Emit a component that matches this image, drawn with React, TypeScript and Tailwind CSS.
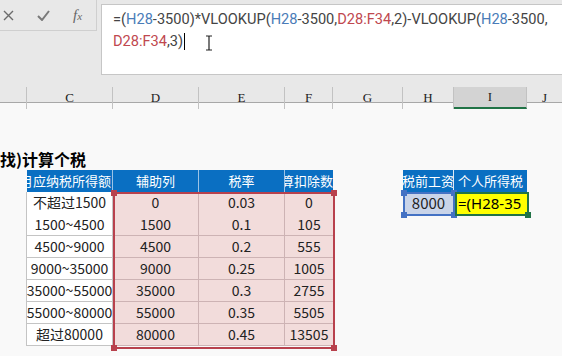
import React from 'react';

const cjk = { fontFamily: '"Noto Sans CJK SC", "Noto Sans", sans-serif' };

const GRID = 'grid grid-cols-[27px_86px_86px_86px_48px_70px_51px_73px_35px]';

const rows = [
  ['不超过1500', '0', '0.03', '0'],
  ['1500~4500', '1500', '0.1', '105'],
  ['4500~9000', '4500', '0.2', '555'],
  ['9000~35000', '9000', '0.25', '1005'],
  ['35000~55000', '35000', '0.3', '2755'],
  ['55000~80000', '55000', '0.35', '5505'],
  ['超过80000', '80000', '0.45', '13505'],
];

function Handle({ className }: { className: string }) {
  return <div className={`absolute w-[6px] h-[6px] ${className}`} />;
}

function FormulaBar() {
  return (
    <div className="flex h-[86px] bg-[#e8e8e8]">
      <div className="w-[101px] shrink-0">
        <div className="w-[97px] h-[31px] border-r border-b border-[#cfcfcf] flex items-center text-[#707070]">
          <svg className="ml-[3px]" width="11" height="11" viewBox="0 0 11 11">
            <path d="M1 1L10 10M10 1L1 10" stroke="#6b6b6b" strokeWidth="1.4" />
          </svg>
          <svg className="ml-[23px]" width="13" height="11" viewBox="0 0 13 11">
            <path d="M1 6L5 10L12 1" stroke="#7a7a7a" strokeWidth="2" fill="none" />
          </svg>
          <span className="ml-[23px] italic text-[15px] text-[#666]" style={{ fontFamily: '"Liberation Serif", serif' }}>
            f<span className="text-[11px]">x</span>
          </span>
        </div>
      </div>
      <div className="flex-1 mt-[4px] h-[71px] bg-white border border-r-0 border-[#c6c6c6] pl-[11px] pt-[3px] text-[14.6px] leading-[22px] text-[#444] whitespace-nowrap relative" style={{ fontFamily: 'Roboto, "Noto Sans", sans-serif' }}>
        <div>
          =(<span className="text-[#4a7cb8]">H28</span>-3500)*VLOOKUP(<span className="text-[#4a7cb8]">H28</span>-3500,<span className="text-[#c0484f]">D28:F34</span>,2)-VLOOKUP(<span className="text-[#4a7cb8]">H28</span>-3500,
        </div>
        <div className="flex items-center">
          <span className="text-[#c0484f]">D28:F34</span>,3)
          <span className="inline-block w-[1px] h-[17px] bg-black ml-[1px]" />
          <svg className="ml-[20px] mt-[4px]" width="8" height="16" viewBox="0 0 8 16">
            <path d="M1 1H3.5Q4 1 4 2V14Q4 15 3.5 15H1M7 1H4.5Q4 1 4 2M7 15H4.5Q4 15 4 14" stroke="#222" strokeWidth="1.2" fill="none" />
          </svg>
        </div>
      </div>
    </div>
  );
}

function ColumnHeaders() {
  const letters = ['', 'C', 'D', 'E', 'F', 'G', 'H', 'I', 'J'];
  return (
    <div className={`${GRID} h-[17px] bg-[#e8e8e8] border-b border-[#a8a8a8]`} style={{ fontFamily: '"Liberation Serif", serif' }}>
      {letters.map((l, i) => (
        <div
          key={i}
          className={`flex items-center justify-center text-[13px] text-[#222] ${i < 8 ? 'border-r border-[#c2c2c2] mt-[1px]' : ''} ${l === 'I' ? 'bg-[#d3d3d3] border-b-2 border-b-[#217346]' : ''}`}
        >
          {l}
        </div>
      ))}
    </div>
  );
}

export default function App() {
  return (
    <div className="w-[562px] h-[356px] overflow-hidden bg-[#f9f9f9]" style={cjk}>
      <FormulaBar />
      <ColumnHeaders />
      <div className="relative">
        <div className="h-[45px]" />
        {/* title */}
        <div className={`${GRID} h-[22px]`}>
          <div className="col-span-2 flex items-center overflow-hidden">
            <span className="whitespace-nowrap font-bold text-[16px] text-black ml-[-16px]">查找)计算个税</span>
          </div>
        </div>
        {/* table header */}
        <div className={`${GRID} h-[22px] text-white text-[13px]`}>
          <div />
          <div className="bg-[#0a6fc2] border-r border-[#9cc3e6] flex items-center justify-end overflow-hidden whitespace-nowrap pr-[1px]">全月应纳税所得额</div>
          <div className="bg-[#0a6fc2] border-r border-[#9cc3e6] flex items-center justify-center">辅助列</div>
          <div className="bg-[#0a6fc2] border-r border-[#9cc3e6] flex items-center justify-center">税率</div>
          <div className="bg-[#0a6fc2] flex items-center overflow-hidden whitespace-nowrap">
            <span className="ml-[-4px]">算扣除数</span>
          </div>
          <div />
          <div className="bg-[#0a6fc2] border-r border-[#dce9f5] flex items-center justify-center whitespace-nowrap overflow-hidden">税前工资</div>
          <div className="bg-[#0a6fc2] flex items-center justify-center whitespace-nowrap">个人所得税</div>
          <div />
        </div>
        {/* data rows */}
        {rows.map((r, idx) => (
          <div key={idx} className={`${GRID} h-[22px] text-[14px] text-[#222]`}>
            <div className="border-r border-[#c4c4c4]" />
            <div className="bg-white border-r border-b border-[#c4c4c4] flex items-center justify-center overflow-hidden whitespace-nowrap">
              {r[0]}
            </div>
            <div className="bg-[#f2dcdb] border-r border-b border-[#cdb3b4] flex items-center justify-center">{r[1]}</div>
            <div className="bg-[#f2dcdb] border-r border-b border-[#cdb3b4] flex items-center justify-center">{r[2]}</div>
            <div className="bg-[#f2dcdb] border-b border-[#cdb3b4] flex items-center justify-center">{r[3]}</div>
            <div />
            {idx === 0 ? (
              <>
                <div className="bg-[#c9d4e9] flex items-center justify-center text-[15px]">8000</div>
                <div className="bg-[#ffff00] flex items-center overflow-hidden whitespace-nowrap text-[15px] text-black pl-[4px]" style={{ fontFamily: '"Noto Sans", sans-serif' }}>
                  =(H28-35
                </div>
              </>
            ) : (
              <>
                <div />
                <div />
              </>
            )}
            <div />
          </div>
        ))}

        {/* red reference box D28:F34 */}
        <div className="absolute left-[113px] top-[89px] w-[222px] h-[157px] border-2 border-[#b8414d]">
          <Handle className="left-[-4px] top-[-4px] bg-[#b8414d]" />
          <Handle className="right-[-4px] top-[-4px] bg-[#b8414d]" />
          <Handle className="left-[-4px] bottom-[-4px] bg-[#b8414d]" />
          <Handle className="right-[-4px] bottom-[-4px] bg-[#b8414d]" />
        </div>
        {/* blue reference box H28 */}
        <div className="absolute left-[403px] top-[89px] w-[52px] h-[24px] border-2 border-[#4472c4]">
          <Handle className="left-[-4px] top-[-4px] bg-[#4472c4]" />
          <Handle className="right-[-4px] top-[-4px] bg-[#4472c4]" />
          <Handle className="left-[-4px] bottom-[-4px] bg-[#4472c4]" />
          <Handle className="right-[-4px] bottom-[-4px] bg-[#4472c4]" />
        </div>
        {/* active cell I28 */}
        <div className="absolute left-[455px] top-[89px] w-[74px] h-[24px] border-2 border-[#217346]">
          <Handle className="right-[-4px] bottom-[-4px] bg-[#217346] w-[5px] h-[5px]" />
        </div>
      </div>
    </div>
  );
}
